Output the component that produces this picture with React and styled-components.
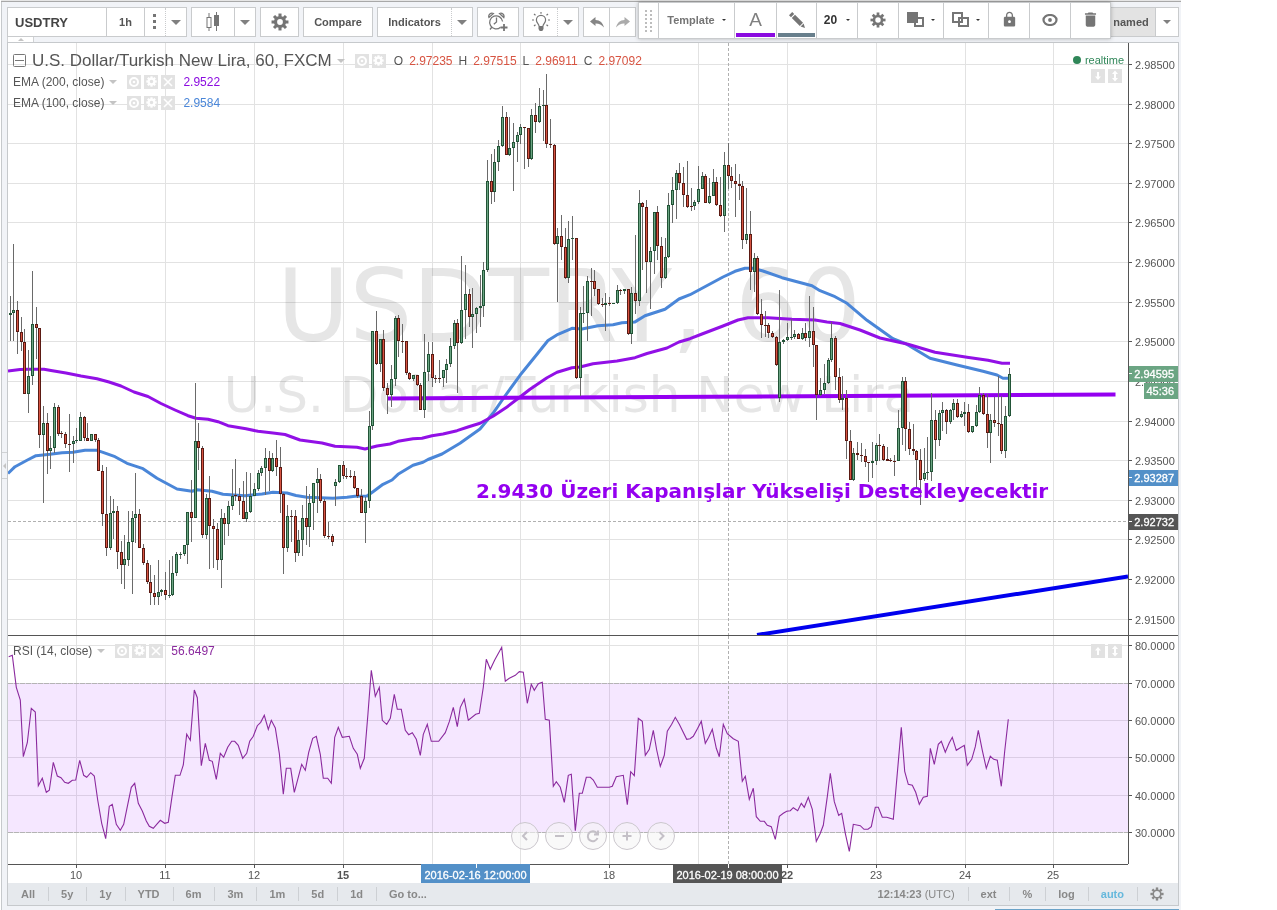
import React from "react"
import styled, { createGlobalStyle, css } from "styled-components"
import { MdDelete, MdLock } from "react-icons/md"

const GlobalStyle = createGlobalStyle`
  *, *::before, *::after { box-sizing: border-box; }
  body {
    margin: 0;
    background: #fff;
    font-family: "Liberation Sans", Arial, sans-serif;
    font-size: 11px;
    color: #555;
  }
  button, input {
    font: inherit;
    color: inherit;
    margin: 0;
    padding: 0;
    border: 0;
    background: none;
  }
  button { cursor: pointer; }
  svg { display: block; }
`

const Page = styled.main`
  position: relative;
  min-height: 100vh;
  margin: 0 96px 0 1px;
  padding: 0 2px 0 5px;
  background: #f1f3f7;
  border-left: 1px solid #c6c9cc;
`

const TopEdge = styled.div`
  height: 2px;
  margin: 0 -2px 0 -6px;
  background: #e6e6e6;
  border-bottom: 1px solid #a8a8a8;
`

const Toolbar = styled.header`
  display: flex;
  gap: 4px;
  height: 35px;
  padding-top: 5px;
`

const Group = styled.div`
  display: flex;
  background: #fff;
  border: 1px solid #c9cbcd;
  ${(props) => props.$end && "margin-left: auto;"}
`

const ToolButton = styled.button`
  display: flex;
  align-items: center;
  justify-content: center;
  width: ${(props) => props.$w}px;
  font-weight: bold;
  color: #555;
  ${(props) => props.$pressed && "background: #e3e3e3; padding-right: 4px;"}
  ${(props) => props.$line && css`border-left: 1px ${props.$line} #c9cbcd;`}
`

const SymbolInput = styled.input`
  width: 98px;
  padding-left: 7px;
  font-size: 13px;
  font-weight: bold;
  color: #444;
  outline: 0;
`

const Caret = styled.span`
  border: ${(props) => props.$size || 5}px solid transparent;
  border-top-color: ${(props) => props.$color || "#808080"};
  border-bottom: 0;
`

const DrawBar = styled.div`
  position: absolute;
  z-index: 3;
  top: 2px;
  right: 70px;
  display: flex;
  height: 37px;
  background: #fff;
  border: 1px solid #c9cbcd;
  box-shadow: 0 0 4px rgba(0, 0, 0, 0.25);
`

const DrawButton = styled.button`
  display: flex;
  align-items: center;
  justify-content: center;
  gap: ${(props) => props.$gap || 7}px;
  width: ${(props) => props.$w}px;
  padding: 0 1px 2px;
  font-size: ${(props) => props.$font || 11}px;
  font-weight: ${(props) => (props.$light ? "normal" : "bold")};
  color: ${(props) => props.$color || "#757575"};
  border-left: 1px solid #c9cbcd;
  ${(props) => props.$bar && css`box-shadow: inset 0 -1px #fff, inset 1px 0 #fff, inset -1px 0 #fff, inset 0 -5px ${props.$bar};`}
`

const Grip = styled.div`
  display: flex;
  align-items: center;
  justify-content: center;
  width: 19px;
`

const TabRow = styled.div`
  height: 5px;
`

const CollapseTab = styled.button`
  display: flex;
  align-items: center;
  justify-content: center;
  width: 27px;
  height: 5px;
  background: #fff;
  border: 1px solid #d0d2d4;
  border-width: 0 1px;
  &::after {
    content: "";
    border: 3px solid transparent;
    border-top: 0;
    border-bottom-color: #c4c4c4;
  }
`

const SideHandle = styled.button`
  position: absolute;
  top: 452px;
  left: 0;
  width: 6px;
  height: 27px;
  border: 1px solid #d0d2d4;
  border-width: 1px 0;
  &::after {
    content: "";
    display: block;
    margin-left: 1px;
    width: 0;
    border: 3px solid transparent;
    border-left: 0;
    border-right-color: #c4c4c4;
  }
`

const ChartFrame = styled.section`
  position: relative;
  background: #fff;
  border: 1px solid #c6c9cc;
`

const Pane = styled.div`
  position: relative;
  display: grid;
  grid-template-columns: minmax(0, 1fr) 50px;
  height: ${(props) => props.$h}px;
  ${(props) => props.$divided && "border-top: 1px solid #555;"}
`

const Plot = styled.svg`
  width: 100%;
  height: 100%;
`

const Axis = styled.svg`
  width: 50px;
  height: 100%;
  border-left: 1px solid #555;
  font-size: 11px;
`

const Legend = styled.div`
  position: absolute;
  top: ${(props) => props.$top}px;
  left: 5px;
`

const LegendRow = styled.div`
  display: flex;
  align-items: center;
  height: 21px;
  font-size: 12px;
  white-space: nowrap;
`

const Title = styled.h1`
  margin: 0 0 0 6px;
  font-size: 17px;
  font-weight: normal;
`

const LegendTools = styled.span`
  display: flex;
  align-items: center;
  gap: 3px;
  margin: 0 8px 0 5px;
  & > span { margin-right: 7px; }
`

const Mini = styled.button`
  display: flex;
  align-items: center;
  justify-content: center;
  width: 14px;
  height: 14px;
  background: #e2e2e2;
`

const Value = styled.span`
  color: ${(props) => props.$color};
`

const Ohlc = styled.span`
  display: flex;
  gap: 6px;
`

const Corner = styled.div`
  position: absolute;
  top: ${(props) => props.$top}px;
  right: 56px;
  display: flex;
  flex-direction: column;
  align-items: flex-end;
`

const Realtime = styled.span`
  display: flex;
  align-items: center;
  gap: 4px;
  height: 18px;
  margin-right: -2px;
  color: #2f8658;
  &::before {
    content: "";
    width: 8px;
    height: 8px;
    border-radius: 50%;
    background: #2f8658;
  }
`

const MiniRow = styled.div`
  display: flex;
  gap: 3px;
`

const Navigation = styled.nav`
  position: absolute;
  bottom: 14px;
  left: 0;
  right: 0;
  display: flex;
  justify-content: center;
  gap: 6px;
`

const NavButton = styled.button`
  width: 28px;
  height: 28px;
  border: 1px solid #cbc7cd;
  border-radius: 50%;
  background: rgba(245, 245, 245, 0.6);
`

const BottomBar = styled.footer`
  display: flex;
  align-items: center;
  height: 22px;
  padding-left: 1px;
  background: #e6e9ed;
  color: #888;
  font-weight: bold;
`

const RangeButton = styled.button`
  height: 14px;
  padding: 0 13px 0 12px;
  font-weight: bold;
  line-height: 14px;
  color: ${(props) => (props.$active ? "#66b8dc" : "#888")};
  border-right: 1px solid ${(props) => (props.$last ? "transparent" : "#cdd0d4")};
`

const Clock = styled.span`
  margin-left: auto;
  padding-right: 13px;
  line-height: 14px;
  border-right: 1px solid #cdd0d4;
  small { font-size: 11px; font-weight: normal; }
`

const StatusLine = styled.div`
  width: 184px;
  height: 1px;
  margin: 3px 0 0 auto;
  background: #6ba3c8;
`

// Bars are "high top bottom low side", measured in thirds of a pixel below `base`.
// Side: g = up, r = down.
const sessions = [
  { base: 230, bars: "200 250 257 335 g,42 240 250 333 g,213 240 308 372 r,262 307 338 365 r,297 337 494 494 r,360 438 494 549 g,123 283 440 467 g,231 283 295 387 r,294 295 617 654 r,528 580 617 819 g,549 580 665 732 r,618 655 665 719 g,519 532 656 670 g,525 532 612 619 r,604 609 613 625 r,607 613 644 654 r,552 642 644 728 r,618 634 644 699 g,595 632 634 640 g,546 562 635 635 g,560 562 626 634 r,580 626 635 635 r,613 613 635 635 g,612 613 632 636 r,625 632 725 725 r,706 724 854 890 r,712 853 954 978 r,798 850 954 960 g,808 844 850 927 g,828 844 967 1017 r,934 967 1006 1062 r,915 988 1006 1077 g,843 937 990 1010 g,843 865 937 1092 g,729 853 865 940 g,837 853 956 956 r,943 955 1000 1005 r,990 1000 1057 1062 r,1005 1057 1091 1125 r,1035 1090 1103 1125 r,990 1087 1103 1125 g,1077 1081 1088 1098 g,1028 1081 1097 1110 r,990 1096 1098 1104 g,979 1030 1097 1100 g,968 973 1031 1040 g,966 972 974 987 g,945 946 973 978 g,846 847 946 1002 g,750 847 866 936 r,459 633 866 866 g,580 633 656 720 r,650 655 917 924 r,794 804 917 927 g,738 804 890 1018 r,867 889 898 1014 r,880 898 992 1022 r,837 865 992 1074 g,849 865 884 945 r,813 829 884 918 g,717 799 829 840 g,687 797 800 815 r,774 800 814 855 r,753 814 869 869 r,726 847 869 876 g,729 799 847 849 g,759 778 799 800 g,720 730 778 785 g,709 715 730 738 g,654 685 715 796 g,663 685 725 783 r,669 685 725 728 g,630 685 713 738 r,652 712 794 850 r,790 793 956 1032 r,825 859 956 966 g,840 858 860 936 r,840 859 971 996 r,900 931 971 978 g" },
  { base: 280, bars: "675 715 781 828 g,618 715 743 795 r,643 670 743 803 g,609 610 670 752 g,564 598 610 700 g,583 598 664 670 r,657 664 769 774 r,727 768 770 778 r,762 768 788 798 r,598 607 619 678 g,556 556 607 609 g,543 556 590 598 r,564 588 590 597 r,570 588 590 594 r,573 589 625 628 r,625 625 650 655 r,628 649 700 700 r,652 664 700 789 g,393 438 664 684 g,153 154 440 450 g,93 154 254 255 r,177 178 254 277 g,150 178 326 333 r,309 325 347 402 r,255 298 347 381 g,110 115 298 318 g,105 115 185 231 r,132 183 185 219 r,184 184 281 285 r,276 280 299 302 r,285 286 299 303 g,285 286 316 320 r,310 316 391 391 r,162 277 391 414 g,186 223 277 304 g,186 223 296 323 r,286 295 297 309 r,240 295 297 309 r,270 271 296 323 g,237 253 271 310 g,174 199 253 263 g,121 130 199 207 g,117 130 190 339 r" },
  { base: 60, bars: "588 751 850 852 g,615 703 751 839 g,687 703 772 802 r,684 763 772 866 g,742 745 763 820 g,645 739 745 802 g,606 631 739 771 g,300 364 631 638 g,282 364 398 432 r,267 307 398 426 g,240 259 307 333 g,138 172 259 262 g,156 172 287 287 r,172 265 287 290 g,189 247 265 393 g,216 226 247 306 g,192 202 226 252 g,201 202 206 327 r,204 205 299 321 r,147 166 299 302 g,129 166 188 219 r,84 139 188 189 g,90 135 139 243 g,42 136 254 264 r,177 253 257 266 r,252 256 554 555 r,504 529 554 726 g,465 529 562 600 r,504 562 656 658 r,483 538 656 669 g,468 535 538 600 g,534 535 956 958 r,741 760 956 1010 g,678 760 762 790 g,648 664 760 843 g,624 663 665 768 r,630 664 688 708 r,688 688 734 736 r,714 733 737 741 r,699 730 737 813 g,711 730 732 740 r,729 730 732 734 g,675 691 731 733 g,687 691 695 706 r,687 688 695 702 g,688 688 824 825 r,682 700 824 852 g,525 700 725 762 r,390 430 725 738 g,426 430 443 632 r,420 442 608 699 r,562 574 608 747 g,457 457 574 642 g,438 457 560 602 r,531 559 656 684 r,534 592 656 657 g,399 436 592 594 g,351 391 436 489 g,330 340 391 477 g,309 340 371 392 r,321 370 407 441 r" },
  { base: 130, bars: "93 196 233 234 r,174 229 233 245 r,210 217 230 240 g,108 178 217 222 g,126 139 178 179 g,133 139 220 221 r,144 199 220 224 g,117 157 199 200 g,142 157 226 228 r,141 226 260 261 r,66 106 260 306 g,40 106 139 178 r,112 139 154 176 r,102 154 163 261 r,132 163 169 210 r,153 169 332 357 r,174 313 332 344 g,243 313 428 480 r,369 385 428 486 g,378 385 554 555 r,507 553 587 624 r,543 585 587 622 r,580 587 611 624 r,604 611 623 625 r,618 622 707 708 r,480 637 805 816 g,627 631 637 644 g,579 622 631 635 g,567 621 623 630 g,600 613 623 627 g,610 613 628 628 r,595 610 628 630 g,579 610 626 634 r,498 604 626 651 g,531 604 646 711 r,645 646 795 870 r,744 781 795 800 g,702 760 781 792 g,684 691 760 763 g,576 625 691 696 g,618 625 742 780 r,714 742 811 819 r,738 805 811 840 g,780 805 934 987 r" },
  { base: 280, bars: "450 484 600 601 r,504 520 600 603 g,486 520 527 540 r,489 526 530 546 r,507 529 547 561 r,546 547 550 606 r,486 544 551 594 g,489 496 544 555 g,462 496 500 543 r,492 499 540 543 r,502 539 543 544 r,534 541 544 546 r,525 543 545 588 r,390 445 544 545 g,291 304 445 495 g,291 304 448 513 r,426 448 508 525 r,432 508 515 525 r,511 514 542 627 r,507 542 600 675 r,504 580 598 605 g,471 576 580 600 g,339 421 577 603 g,390 421 482 537 r,391 400 482 498 g,366 391 400 453 g,388 391 427 462 r,387 391 427 432 g,357 370 391 420 g,357 370 412 414 r,393 403 412 414 g,366 397 403 438 g,372 397 458 459 r,439 439 458 459 g,375 397 439 442 g,321 346 397 399 g,339 346 403 405 r,343 403 460 504 r,402 421 460 549 g,351 421 430 442 r,289 430 433 468 r,348 433 514 522 r,378 409 514 534 g,264 283 409 411 g" },
]

const candles = sessions
  .flatMap(({ base, bars }) =>
    bars.split(",").map((bar) => {
      const [high, top, bottom, low, side] = bar.split(" ")
      const toY = (v) => base + Math.floor(Number(v) / 3)
      return { high: toY(high), top: toY(top), bottom: toY(bottom), low: toY(low), up: side === "g" }
    })
  )
  .map((bar, i) => ({ ...bar, x: Math.floor(10.1 + 3.701 * i) }))

const ema200 = "8,371 20,369.5 28,369.3 44,369.3 51,370.5 66,373 81,376 97,378.7 109,382 121,386 134,392 148,396.5 161,403.5 175,410 188,415.7 196,418.3 208,419.3 218,421.7 228,425.7 246,428.7 258,431.3 273,433 285,434.5 300,440 322,443 335,446.3 357,447.3 365,449 377,446 390,444 398,441.3 413,438.7 422,438.3 432,435.7 443,434 457,430.7 468,427 480,423.3 493,416.3 507,407 520,397 530,389.3 547,377.7 557,372.3 572,367.7 580,367 593,363.7 617,361 635,357.7 647,353.5 667,348 679,342 690,338.7 702,334 723,326 738,320 748,317.7 768,317.7 792,319.3 815,320 827,322 840,323.5 860,330 880,338 908,344.3 935,352.3 967,357.3 988,360.3 1002,363.3 1010,363.3"
const ema100 = "8,473.5 15,466.7 27,460.3 36,455.7 50,454.3 62,452.7 73,452.3 85,450.3 97,450.3 103,452.3 115,456.7 127,463.3 143,468.7 157,478.3 177,489 192,491.3 197,489.7 212,491.3 223,494.3 245,495.7 262,494 273,492.3 287,493 296,495.5 307,497.3 333,498.3 347,497.3 355,496.3 367,496 373,491.7 383,484.3 392,480 398,474.3 413,465.3 423,462.3 428,459.5 442,454 460,443.3 480,429 493,413.3 505,396 520,375.3 537,354.3 548,340.5 558,334.3 572,328.3 582,329 598,325.7 613,324.7 622,322.7 635,321.9 645,315.8 665,309.3 679,299 690,294.7 723,277 735,271.3 745,268.3 753,268.3 763,271 782,277.7 812,285.7 820,290.7 835,296.7 847,303.3 867,320.3 893,338.7 905,343.3 930,358.3 957,365 983,371.3 997,375 1003,378.3 1010,378.3"

// RSI points in thirds of a pixel, relative to x `from` and y 630
const rsiParts = [
  { from: 0, points: "26,80 37,76 49,172 61,210 70,380 82,338 94,235 106,246 115,467 127,445 139,487 148,481 160,397 172,438 183,443 194,457 205,460 217,451 227,450 239,391 251,436 260,442 272,428 283,438 293,510 305,580 317,626 328,529 337,523 349,583 361,601 371,583 382,530 394,472 404,460 415,520 427,543 439,573 448,589 460,595 470,583 481,571 494,580 505,577 516,500 526,436 540,436 550,405 560,313 571,331 583,180 592,203 604,407 616,340 628,391 637,394 649,448 661,370 671,382 683,352 695,334 704,334 715,346 728,385 740,370 749,334 760,319 772,287 782,277 793,256 805,298 814,271 826,294 838,370 850,493 859,415 872,415 883,487 894,445 905,403 916,421 926,367 938,325 949,319 961,373 970,445 983,445 994,460 1004,322 1015,292 1027,322 1048,319 1060,355 1072,373 1081,415 1093,385 1104,250 1114,121 1126,199 1138,172 1147,271 1160,283" },
  { from: 390, points: "1,265 13,193 22,238 34,238 46,301 56,314 67,308 79,328 91,376 100,313 112,283 124,334 146,334 166,308 178,275 190,232 202,290 211,232 223,208 235,271 257,253 268,250 280,172 289,88 301,118 314,90 335,52 346,154 358,145 376,136 388,125 400,127 412,220 424,163 433,181 445,161 457,157 466,268 478,271 490,469 499,455 511,472 523,517 535,436 544,433 556,602 568,490 577,490 589,442 601,442 610,450 622,472 658,472 667,469 679,440 700,436 712,524 722,425 733,437 745,265 757,274 766,376 778,358 790,301 800,360 811,409 823,376 832,304 845,283 856,262 868,283 890,328 900,326 910,319 923,295 934,274 946,340 956,322 967,298 979,355 988,380 1000,283 1012,311 1030,326 1045,334 1057,454 1066,439 1078,508 1090,475 1099,560 1111,574 1123,574 1132,586 1144,590 1156,628 1168,559" },
  { from: 780, points: "10,550 20,544 31,542 40,533 53,542 64,520 73,532 85,502 97,538 109,634 120,612 130,586 142,500 151,430 163,515 176,556 185,550 196,610 208,664 220,583 241,587 252,598 264,598 274,590 286,532 295,532 307,562 320,562 340,568 352,430 364,292 374,424 385,463 397,466 407,487 418,523 430,502 442,499 451,355 463,403 475,343 484,334 496,367 508,338 517,322 529,361 541,353 553,346 562,406 575,388 586,350 595,301 607,361 619,415 631,379 641,388 652,391 664,469 674,364 685,268" },
]

const rsi = rsiParts
  .flatMap(({ from, points }) =>
    points.split(" ").map((point) => {
      const [x, y] = point.split(",").map(Number)
      return `${(from + x / 3).toFixed(1)},${(630 + y / 3).toFixed(1)}`
    })
  )
  .join(" ")

const priceTicks = [
  [64, "2.98500"], [104, "2.98000"], [143, "2.97500"], [183, "2.97000"], [222, "2.96500"],
  [262, "2.96000"], [302, "2.95500"], [341, "2.95000"], [381, "2.94500"], [421, "2.94000"],
  [460, "2.93500"], [500, "2.93000"], [539, "2.92500"], [579, "2.92000"], [619, "2.91500"],
]
const rsiTicks = [
  [645, "80.0000"], [683, "70.0000"], [720, "60.0000"], [757, "50.0000"], [795, "40.0000"], [832, "30.0000"],
]
const timeTicks = [
  [76, "10"], [165, "11"], [254, "12"], [343, "15", true], [432, ""], [520, ""],
  [609, "18"], [698, ""], [787, "22", true], [876, "23"], [965, "24"], [1053, "25"],
]
const ranges = ["All", "5y", "1y", "YTD", "6m", "3m", "1m", "5d", "1d", "Go to..."]

function Gear({ size, ring = 5, width = 3.6, color = "#757575", tooth = 3.4 }) {
  return (
    <svg width={size} height={size} viewBox="-10 -10 20 20">
      <circle r={ring} fill="none" stroke={color} strokeWidth={width} />
      {[0, 45, 90, 135, 180, 225, 270, 315].map((a) => (
        <rect key={a} x={-tooth / 2} y="-9.4" width={tooth} height="3.6" fill={color} transform={`rotate(${a})`} />
      ))}
    </svg>
  )
}

function MiniIcon({ kind, label }) {
  return (
    <Mini aria-label={label}>
      {kind === "gear" ? (
        <Gear size={11} ring={5.2} width={4} color="#fff" tooth={4} />
      ) : (
        <svg width="14" height="14" viewBox="0 0 14 14" fill="none" stroke="#fff">
          {kind === "eye" && <><circle cx="7" cy="7" r="4" strokeWidth="2" /><circle cx="7" cy="7" r="1.3" fill="#fff" stroke="none" /></>}
          {kind === "close" && <path d="M3 3l8 8M11 3l-8 8" strokeWidth="1.6" />}
          {kind === "down" && <><path d="M7 3v5" strokeWidth="2" /><path d="M4 7.500h6L7 11z" fill="#fff" stroke="none" /></>}
          {kind === "up" && <><path d="M7 6v5" strokeWidth="2" /><path d="M4 6.500h6L7 3z" fill="#fff" stroke="none" /></>}
          {kind === "both" && <><path d="M7 4v6" strokeWidth="2" /><path d="M4 5h6L7 1.500zM4 9h6l-3 3.500z" fill="#fff" stroke="none" /></>}
        </svg>
      )}
    </Mini>
  )
}

function Grid({ rows, top, bottom }) {
  return (
    <g fill="#e2e2e2">
      {timeTicks.map(([x]) => <rect key={x} x={x} y={top} width="1" height={bottom - top} />)}
      {rows.map(([y]) => <rect key={y} x="8" y={y} width="1120" height="1" />)}
    </g>
  )
}

function Scale({ rows, top, height, children }) {
  return (
    <Axis viewBox={`1129 ${top} 49 ${height}`} preserveAspectRatio="xMinYMin slice">
      {rows.map(([y, label]) => (
        <g key={y}>
          <rect x="1129" y={y} width="3" height="1" fill="#555" />
          <text x="1135" y={y + 5} fill="#555">{label}</text>
        </g>
      ))}
      {children}
    </Axis>
  )
}

function PriceTag({ y, color, label, x = 1129 }) {
  return (
    <g>
      <rect x={x} y={y} width={1178 - x} height="16" fill={color} />
      {x === 1129 && <rect x="1129" y={y + 7} width="3" height="1" fill="#fff" />}
      <text x="1174" y={y + 12} textAnchor="end" fill="#fff" stroke="#fff" strokeWidth="0.3">{label}</text>
    </g>
  )
}

function DateTag({ x, width, color, label }) {
  return (
    <g>
      <rect x={x} y="864" width={width} height="19" fill={color} />
      <rect x={x + (width + 1) / 2} y="864" width="1" height="4" fill="#fff" />
      <text x={x + width / 2} y="879" textAnchor="middle" fill="#fff" stroke="#fff" strokeWidth="0.3">{label}</text>
    </g>
  )
}

function Study({ name, value, color }) {
  return (
    <LegendRow>
      {name}
      <LegendTools>
        <Caret $size={4} $color="#c4c4c4" />
        <MiniIcon kind="eye" label="Hide" />
        <MiniIcon kind="gear" label="Format" />
        <MiniIcon kind="close" label="Remove" />
      </LegendTools>
      <Value $color={color}>{value}</Value>
    </LegendRow>
  )
}

function TopToolbar() {
  return (
    <Toolbar>
      <Group>
        <SymbolInput aria-label="Symbol" defaultValue="USDTRY" />
        <ToolButton $w={38} $line="solid">1h</ToolButton>
        <ToolButton $w={21} $line="solid" aria-label="Intervals">
          <svg width="4" height="16" fill="#757575"><path d="M0 0h3v3H0zM0 6h3v3H0zM0 12h3v3H0z" /></svg>
        </ToolButton>
        <ToolButton $w={21} $line="dotted" aria-label="More intervals"><Caret /></ToolButton>
      </Group>
      <Group>
        <ToolButton $w={42} aria-label="Bar style">
          <svg width="14" height="20" viewBox="0 0 14 20">
            <path d="M3 1v4M3 16v3M10.500 0v19" stroke="#757575" />
            <rect x="1" y="5.500" width="4" height="10" fill="#fff" stroke="#757575" />
            <rect x="8" y="3" width="5" height="11" fill="#757575" />
          </svg>
        </ToolButton>
        <ToolButton $w={21} $line="solid" aria-label="More bar styles"><Caret /></ToolButton>
      </Group>
      <Group><ToolButton $w={37} aria-label="Properties"><Gear size={18} /></ToolButton></Group>
      <Group><ToolButton $w={68}>Compare</ToolButton></Group>
      <Group>
        <ToolButton $w={73}>Indicators</ToolButton>
        <ToolButton $w={21} $line="dotted" aria-label="More indicators"><Caret /></ToolButton>
      </Group>
      <Group>
        <ToolButton $w={40} aria-label="Add alert">
          <svg width="20" height="20" viewBox="0 0 20 20" fill="none" stroke="#757575" strokeWidth="1.300">
            <path d="M12.500 15.200A6.500 6.500 0 1 1 14.600 9.500M8.500 5.500V10L5.800 12.300M3.500 15.500L2 17.500" />
            <path d="M1 5.500A3.200 3.200 0 0 1 5.500 1.500zM11.500 1.500A3.200 3.200 0 0 1 15.800 5.500z" />
            <path d="M16 12v7M12.500 15.500h7" strokeWidth="1.800" />
          </svg>
        </ToolButton>
      </Group>
      <Group>
        <ToolButton $w={33} aria-label="Ideas">
          <svg width="20" height="20" viewBox="0 0 20 20" fill="none" stroke="#757575" strokeWidth="1.200">
            <path d="M8 14c0-2-2.600-3-2.600-6a4.600 4.600 0 0 1 9.200 0c0 3-2.600 4-2.600 6" />
            <path d="M7.500 14h5v3l-1.200 2H8.700L7.500 17z" fill="#757575" stroke="none" />
            <path d="M10 0v1.800M3 2l1.500 1.300M17 2l-1.500 1.300M1 8h2M17 8h2M3 14l1.500-1.300M17 14l-1.500-1.300" />
          </svg>
        </ToolButton>
        <ToolButton $w={21} $line="dotted" aria-label="More ideas"><Caret /></ToolButton>
      </Group>
      <Group>
        <ToolButton $w={25} aria-label="Undo">
          <svg width="14" height="12" viewBox="0 0 14 12" fill="#858585"><path d="M0 5.500L5.500 1v3C10 4 13 7 14 11.500 11.500 8.500 9 7.400 5.500 7.500V10z" /></svg>
        </ToolButton>
        <ToolButton $w={26} $line="solid" aria-label="Redo">
          <svg width="14" height="12" viewBox="0 0 14 12" fill="#ababab"><path d="M14 5.500L8.500 1v3C4 4 1 7 0 11.500 2.500 8.500 5 7.400 8.500 7.500V10z" /></svg>
        </ToolButton>
      </Group>
      <Group $end>
        <ToolButton $w={44} $pressed>named</ToolButton>
        <ToolButton $w={23} $line="solid" aria-label="Layouts"><Caret $size={4} /></ToolButton>
      </Group>
    </Toolbar>
  )
}

function DrawingToolbar() {
  return (
    <DrawBar>
      <Grip>
        <svg width="7" height="22" fill="#bdbdbd">
          {[0, 4, 8, 12, 16, 20].map((y) => <path key={y} d={`M0 ${y}h2v2h-2zM5 ${y}h2v2h-2z`} />)}
        </svg>
      </Grip>
      <DrawButton $w={76}>Template <Caret $size={2} $color="#333" /></DrawButton>
      <DrawButton $w={42} $font={19} $light $color="#808080" $bar="#8b0be0" aria-label="Text color">A</DrawButton>
      <DrawButton $w={40} $bar="#687f8c" aria-label="Line color">
        <svg width="18" height="18" viewBox="0 0 18 18" fill="#757575">
          <path d="M1 4.200L4.200 1l2 2L3 6.200zM3.800 7L7 3.800l8 8L11.800 15zM15.600 12.600L17 17l-4.400-1.400z" />
        </svg>
      </DrawButton>
      <DrawButton $w={41} $font={12} $color="#333" $gap={9}>20 <Caret $size={2} $color="#333" /></DrawButton>
      <DrawButton $w={41} aria-label="Format"><Gear size={16} ring={5} width={3.2} /></DrawButton>
      <DrawButton $w={45} aria-label="Bring forward" $gap={6}>
        <svg width="18" height="16" viewBox="0 0 18 16">
          <rect x="8" y="6" width="8" height="8" fill="#fff" stroke="#757575" strokeWidth="2" />
          <path d="M0 0h11v11H0z" fill="#757575" />
        </svg>
        <Caret $size={2} $color="#333" />
      </DrawButton>
      <DrawButton $w={45} aria-label="Clone" $gap={6}>
        <svg width="18" height="16" viewBox="0 0 18 16" fill="none" stroke="#757575" strokeWidth="2">
          <path d="M1 1h9v9H1zM7 6h9v8H7z" />
        </svg>
        <Caret $size={2} $color="#333" />
      </DrawButton>
      <DrawButton $w={41} aria-label="Lock"><MdLock size={17} /></DrawButton>
      <DrawButton $w={41} aria-label="Hide">
        <svg width="16" height="12" viewBox="0 0 16 12" fill="none" stroke="#757575">
          <ellipse cx="8" cy="6" rx="6.500" ry="5" strokeWidth="2.200" /><circle cx="8" cy="6" r="1.900" fill="#757575" stroke="none" />
        </svg>
      </DrawButton>
      <DrawButton $w={40} aria-label="Delete"><MdDelete size={19} /></DrawButton>
    </DrawBar>
  )
}

function PricePane() {
  return (
    <Pane $h={592}>
      <Plot viewBox="8 43 1120 592" preserveAspectRatio="xMaxYMin slice">
        <g fill="#e6e6e6" fontFamily='"DejaVu Sans", Verdana, sans-serif' textAnchor="middle">
          <text x="569" y="341" fontSize="99">USDTRY, 60</text>
          <text x="569" y="412" fontSize="50">U.S. Dollar/Turkish New Lira</text>
        </g>
        <g style={{ mixBlendMode: "multiply" }}><Grid rows={priceTicks} top={43} bottom={635} /></g>
        <path d="M8 521.500H1128M728.500 43V635" stroke="#b0b0b0" strokeDasharray="3 2" />
        <polyline points={ema100} fill="none" stroke="#4a86d8" strokeWidth="3" strokeLinejoin="round" />
        <polyline points={ema200} fill="none" stroke="#9210e6" strokeWidth="3" strokeLinejoin="round" />
        <path d="M387 398.500L1115.500 394.500" stroke="#9400f0" strokeWidth="4" />
        {candles.map(({ x, high, top, bottom, low, up }) => (
          <g key={x} shapeRendering="crispEdges">
            <rect x={x} y={high} width="1" height={Math.max(low - high, 1)} fill="#6a6a6a" />
            <rect x={x - 1} y={top} width="3" height={Math.max(bottom - top, 1)} fill={up ? "#225437" : "#5b1a13"} />
            <rect x={x} y={top + 1} width="1" height={Math.max(bottom - top - 2, 0)} fill={up ? "#6ba583" : "#d75442"} />
          </g>
        ))}
        <path d="M757 635L1128 576.500" stroke="#0000ee" strokeWidth="4" />
        <text x="476" y="498" fill="#9400f0" fontFamily='"DejaVu Sans", Verdana, sans-serif' fontSize="20" fontWeight="bold">
          2.9430 Üzeri Kapanışlar Yükselişi Destekleyecektir
        </text>
      </Plot>
      <Scale rows={priceTicks} top={43} height={592}>
        <PriceTag y={366} color="#6ba583" label="2.94595" />
        <PriceTag y={383} x={1144} color="#6ba583" label="45:36" />
        <PriceTag y={470} color="#5390c8" label="2.93287" />
        <PriceTag y={514} color="#555" label="2.92732" />
      </Scale>
      <Legend $top={7}>
        <LegendRow>
          <svg width="13" height="13" fill="none" stroke="#777"><rect x="0.500" y="0.500" width="12" height="12" rx="1" /><path d="M2 6.500h9" /></svg>
          <Title>U.S. Dollar/Turkish New Lira, 60, FXCM</Title>
          <LegendTools>
            <Caret $size={4} $color="#c4c4c4" />
            <MiniIcon kind="eye" label="Hide" />
            <MiniIcon kind="gear" label="Format" />
          </LegendTools>
          <Ohlc>
            <span>O</span><Value $color="#d75442">2.97235</Value>
            <span>H</span><Value $color="#d75442">2.97515</Value>
            <span>L</span><Value $color="#d75442">2.96911</Value>
            <span>C</span><Value $color="#d75442">2.97092</Value>
          </Ohlc>
        </LegendRow>
        <Study name="EMA (200, close)" value="2.9522" color="#8b0be0" />
        <Study name="EMA (100, close)" value="2.9584" color="#4a86d8" />
      </Legend>
      <Corner $top={8}>
        <Realtime>realtime</Realtime>
        <MiniRow>
          <MiniIcon kind="down" label="Move pane down" />
          <MiniIcon kind="both" label="Maximize pane" />
        </MiniRow>
      </Corner>
    </Pane>
  )
}

function RsiPane() {
  return (
    <Pane $h={229} $divided>
      <Plot viewBox="8 636 1120 228" preserveAspectRatio="xMaxYMin slice">
        <Grid rows={rsiTicks} top={636} bottom={864} />
        <rect x="8" y="683" width="1120" height="149" fill="#9915ff" fillOpacity="0.1" />
        <path d="M8 683.500H1128M8 832.500H1128" stroke="#b4b4b4" strokeDasharray="5 1" />
        <path d="M728.500 636V864" stroke="#b0b0b0" strokeDasharray="3 2" />
        <polyline points={rsi} fill="none" stroke="#8b2a9e" strokeWidth="1.100" />
      </Plot>
      <Scale rows={rsiTicks} top={636} height={228} />
      <Legend $top={4}>
        <Study name="RSI (14, close)" value="56.6497" color="#8b2a9e" />
      </Legend>
      <Corner $top={8}>
        <MiniRow>
          <MiniIcon kind="up" label="Move pane up" />
          <MiniIcon kind="both" label="Maximize pane" />
        </MiniRow>
      </Corner>
      <Navigation>
        {[
          ["Scroll left", "M15 9l-4 4 4 4"],
          ["Zoom out", "M9 13h9"],
          ["Reset", "M17 10.500a5 5 0 1 0 0.500 4.500M18 7.500v4h-4"],
          ["Zoom in", "M8.500 13h9M13 8.500v9"],
          ["Scroll right", "M11.500 9l4 4-4 4"],
        ].map(([label, d]) => (
          <NavButton key={label} aria-label={label}>
            <svg width="26" height="26" fill="none" stroke="#c4c0c7" strokeWidth="2"><path d={d} /></svg>
          </NavButton>
        ))}
      </Navigation>
    </Pane>
  )
}

function TimeScale() {
  return (
    <Pane $h={19}>
      <Plot viewBox="8 864 1120 19" preserveAspectRatio="xMaxYMin slice" fontSize="11">
        <rect x="8" y="864" width="1120" height="1" fill="#555" />
        {timeTicks.filter(([, label]) => label).map(([x, label, bold]) => (
          <g key={x} fill="#555">
            <rect x={x} y="864" width="1" height="4" />
            <text x={x} y="879" textAnchor="middle" fontWeight={bold ? "bold" : "normal"}>{label}</text>
          </g>
        ))}
        <DateTag x={421} width={109} color="#5390c8" label="2016-02-16 12:00:00" />
        <DateTag x={673} width={109} color="#555" label="2016-02-19 08:00:00" />
      </Plot>
    </Pane>
  )
}

export default function App() {
  return (
    <Page>
      <GlobalStyle />
      <TopEdge />
      <TopToolbar />
      <DrawingToolbar />
      <TabRow><CollapseTab aria-label="Collapse toolbar" /></TabRow>
      <SideHandle aria-label="Collapse side panel" />
      <ChartFrame>
        <PricePane />
        <RsiPane />
        <TimeScale />
        <BottomBar>
          {ranges.map((range, i) => (
            <RangeButton key={range} $last={i === ranges.length - 1}>{range}</RangeButton>
          ))}
          <Clock>12:14:23 <small>(UTC)</small></Clock>
          <RangeButton>ext</RangeButton>
          <RangeButton>%</RangeButton>
          <RangeButton>log</RangeButton>
          <RangeButton $active>auto</RangeButton>
          <RangeButton $last aria-label="Scale settings"><Gear size={14} ring={5.4} width={2.2} color="#888" /></RangeButton>
        </BottomBar>
      </ChartFrame>
      <StatusLine />
    </Page>
  )
}
